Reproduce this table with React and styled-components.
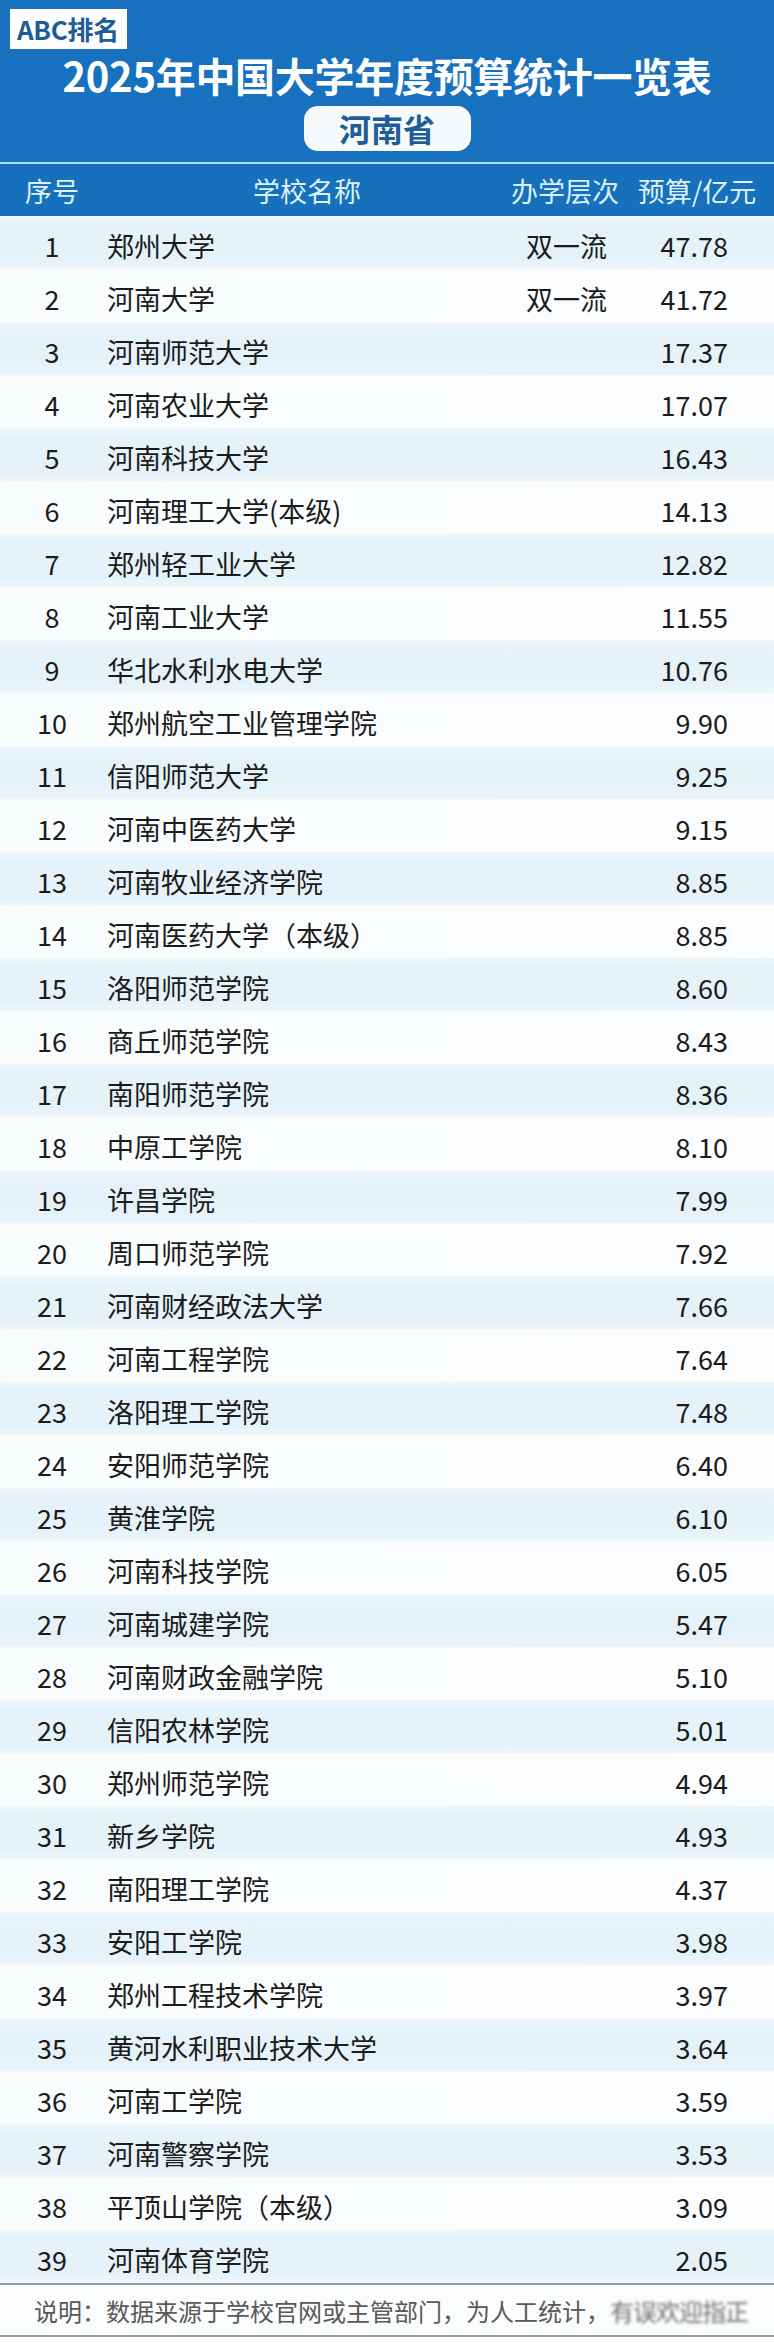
import styled, { createGlobalStyle } from "styled-components";

const GlobalStyle = createGlobalStyle`
  body {
    margin: 0;
    background: #ffffff;
    font-family: "Noto Sans CJK SC", "Noto Sans", sans-serif;
  }
`;

const FONT = `"Noto Sans CJK SC", "Noto Sans", sans-serif`;

const rows = [
  [1, "郑州大学", "双一流", "47.78"],
  [2, "河南大学", "双一流", "41.72"],
  [3, "河南师范大学", "", "17.37"],
  [4, "河南农业大学", "", "17.07"],
  [5, "河南科技大学", "", "16.43"],
  [6, "河南理工大学(本级)", "", "14.13"],
  [7, "郑州轻工业大学", "", "12.82"],
  [8, "河南工业大学", "", "11.55"],
  [9, "华北水利水电大学", "", "10.76"],
  [10, "郑州航空工业管理学院", "", "9.90"],
  [11, "信阳师范大学", "", "9.25"],
  [12, "河南中医药大学", "", "9.15"],
  [13, "河南牧业经济学院", "", "8.85"],
  [14, "河南医药大学（本级）", "", "8.85"],
  [15, "洛阳师范学院", "", "8.60"],
  [16, "商丘师范学院", "", "8.43"],
  [17, "南阳师范学院", "", "8.36"],
  [18, "中原工学院", "", "8.10"],
  [19, "许昌学院", "", "7.99"],
  [20, "周口师范学院", "", "7.92"],
  [21, "河南财经政法大学", "", "7.66"],
  [22, "河南工程学院", "", "7.64"],
  [23, "洛阳理工学院", "", "7.48"],
  [24, "安阳师范学院", "", "6.40"],
  [25, "黄淮学院", "", "6.10"],
  [26, "河南科技学院", "", "6.05"],
  [27, "河南城建学院", "", "5.47"],
  [28, "河南财政金融学院", "", "5.10"],
  [29, "信阳农林学院", "", "5.01"],
  [30, "郑州师范学院", "", "4.94"],
  [31, "新乡学院", "", "4.93"],
  [32, "南阳理工学院", "", "4.37"],
  [33, "安阳工学院", "", "3.98"],
  [34, "郑州工程技术学院", "", "3.97"],
  [35, "黄河水利职业技术大学", "", "3.64"],
  [36, "河南工学院", "", "3.59"],
  [37, "河南警察学院", "", "3.53"],
  [38, "平顶山学院（本级）", "", "3.09"],
  [39, "河南体育学院", "", "2.05"],
];

const Page = styled.div`
  width: 774px;
  background: #f9fcfd;
  font-family: ${FONT};
`;

const Banner = styled.header`
  height: 164px;
  box-sizing: border-box;
  padding: 9px 10px 0;
  background: #1871bf;
  display: flex;
  flex-direction: column;
  align-items: center;
  border-bottom: 2px solid #b4e0f5;
`;

const Badge = styled.div`
  align-self: flex-start;
  height: 40px;
  padding: 0 8px 0 7px;
  background: #ffffff;
  color: #1c5c97;
  font-size: 26px;
  font-weight: 700;
  line-height: 40px;
  letter-spacing: -0.3px;
`;

const Title = styled.h1`
  margin: 2px 0 0;
  color: #ffffff;
  font-size: 40px;
  font-weight: 700;
  line-height: 48px;
  letter-spacing: -0.3px;
`;

const Province = styled.div`
  margin-top: 7px;
  width: 167px;
  height: 45px;
  border-radius: 14px;
  background: #f6fafd;
  color: #1d5e97;
  font-size: 32px;
  font-weight: 700;
  line-height: 45px;
  text-align: center;
`;

const Grid = styled.div`
  display: grid;
  grid-template-columns: 104px 406px 110px 1fr;
  align-items: center;
`;

const HeadRow = styled(Grid)`
  height: 52px;
  background: #1670bc;
  color: #dcf0fb;
  font-size: 27px;
  line-height: 1;
`;

const HeadCell = styled.div`
  text-align: center;
`;

const Row = styled(Grid)`
  height: 53px;
  color: #1b1b1b;
  font-size: 27px;
  line-height: 1;
  padding-top: 5px;
  box-sizing: border-box;
  background: ${(p) =>
    p.$odd
      ? "linear-gradient(to bottom, #edf6fb 0%, #e5f2fa 20%, #e5f2fa 80%, #edf6fb 100%)"
      : "linear-gradient(to right, #f9fcfd 0%, #fbfdfe 100%)"};
`;

const Num = styled.div`
  text-align: center;
`;

const Name = styled.div`
  padding-left: 3px;
  white-space: nowrap;
`;

const Level = styled.div`
  text-align: center;
  padding-left: 3px;
`;

const Budget = styled.div`
  text-align: right;
  padding-right: 46px;
`;

const Footer = styled.footer`
  height: 54px;
  box-sizing: border-box;
  border-top: 2px solid #8f9ea6;
  border-bottom: 2px solid #8f9ea6;
  background: #fbfcfc;
  padding-left: 34px;
  display: flex;
  align-items: center;
  color: #595959;
  font-size: 24px;
  white-space: nowrap;
  overflow: hidden;
`;

const Blur = styled.span`
  filter: blur(1.4px);
  color: #707070;
  letter-spacing: -1px;
`;

const Tail = styled.div`
  height: 3px;
  background: #ffffff;
`;

export default function App() {
  return (
    <Page>
      <GlobalStyle />
      <Banner>
        <Badge>ABC排名</Badge>
        <Title>2025年中国大学年度预算统计一览表</Title>
        <Province>河南省</Province>
      </Banner>
      <HeadRow>
        <HeadCell>序号</HeadCell>
        <HeadCell>学校名称</HeadCell>
        <HeadCell>办学层次</HeadCell>
        <HeadCell>预算/亿元</HeadCell>
      </HeadRow>
      {rows.map(([n, name, level, budget]) => (
        <Row key={n} $odd={n % 2 === 1}>
          <Num>{n}</Num>
          <Name>{name}</Name>
          <Level>{level}</Level>
          <Budget>{budget}</Budget>
        </Row>
      ))}
      <Footer>
        说明：数据来源于学校官网或主管部门，为人工统计，
        <Blur>有误欢迎指正</Blur>
      </Footer>
      <Tail />
    </Page>
  );
}
